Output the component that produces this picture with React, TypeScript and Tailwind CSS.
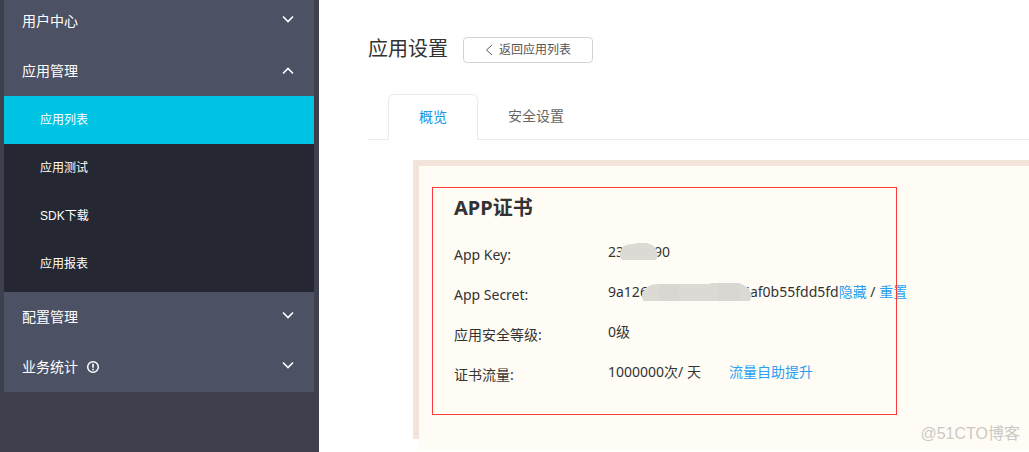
import type { ReactNode } from "react";
import clsx from "clsx";

interface IMenuGroup {
	title: string;
	open?: boolean;
	info?: boolean;
	items?: string[];
}

const menu: IMenuGroup[] = [
	{ title: "用户中心" },
	{
		title: "应用管理",
		open: true,
		items: ["应用列表", "应用测试", "SDK下载", "应用报表"],
	},
	{ title: "配置管理" },
	{ title: "业务统计", info: true },
];

const Chevron = ({ up }: { up?: boolean }) => (
	<svg
		width="12"
		height="8"
		viewBox="0 0 12 8"
		fill="none"
		stroke="currentColor"
		strokeWidth="1.6"
		className={clsx(!up && "mb-1")}
	>
		<path d={up ? "M1 6.5L6 1.5L11 6.5" : "M1 1.5L6 6.5L11 1.5"} />
	</svg>
);

const InfoIcon = () => (
	<svg width="14" height="14" viewBox="0 0 14 14" fill="none" stroke="currentColor">
		<circle cx="7" cy="7" r="5.3" strokeWidth="1.5" />
		<path d="M7 3.8V7.8M7 8.8V10.2" strokeWidth="1.6" />
	</svg>
);

const MenuGroup = ({ title, open, info, items }: IMenuGroup) => (
	<li>
		<button
			aria-expanded={!!open}
			className="flex items-center justify-between w-full h-[50px] pl-[18px] pr-5 text-sm text-white bg-[#4d5164]"
		>
			<span className="flex items-center gap-2">
				{title}
				{info && <InfoIcon />}
			</span>
			<Chevron up={open} />
		</button>

		{open && items && (
			<ul className="pb-1 bg-[#252732]">
				{items.map((item, i) => (
					<li key={item}>
						<a
							href="#"
							className={clsx(
								"flex items-center h-12 pl-9 text-xs text-white",
								i === 0 && "bg-[#00c4e3]"
							)}
						>
							{item}
						</a>
					</li>
				))}
			</ul>
		)}
	</li>
);

const Sidebar = () => (
	<nav className="shrink-0 w-[319px] pl-1 pr-[5px] overflow-hidden bg-[#3e404d] font-['Liberation_Sans','Noto_Sans_CJK_SC',sans-serif]">
		<ul className="-mt-1">
			{menu.map((group) => (
				<MenuGroup key={group.title} {...group} />
			))}
		</ul>
	</nav>
);

const Row = ({ label, children }: { label: string; children: ReactNode }) => (
	<div className="flex items-center h-10">
		<dt className="w-[154px] shrink-0">{label}</dt>
		<dd className="flex items-center pb-1.5 whitespace-pre">{children}</dd>
	</div>
);

const Link = ({ children }: { children: ReactNode }) => (
	<a href="#" className="text-[#2b9ff0]">
		{children}
	</a>
);

const KeyMask = () => (
	<svg width="38" height="18" viewBox="0 0 38 18" className="relative -mx-1">
		<path
			d="M2 17L0 14V10Q1 5 4 3Q7 1 14 1L17 0H26L30 1Q36 4 37 8L38 13L36 17Z"
			fill="#dcdad5"
		/>
	</svg>
);

const SecretMask = () => (
	<svg width="110" height="18" viewBox="0 0 110 18" className="relative -ml-1.5 -mr-2.5">
		<path
			d="M1 18L0 12Q2 6 7 3Q10 1 15 1H66L70 0H96Q104 2 107 6L110 12L108 18Z"
			fill="#dcdad5"
		/>
		<path d="M17 1H37V18H17Z" fill="#d9d7d2" />
		<path d="M76 0H96Q98 0 98 1V18H76Z" fill="#d9d7d2" />
	</svg>
);

const Certificate = () => (
	<section className="relative ml-[45px] mt-5 border-t-6 border-[#f2e4da] flex">
		<div className="w-1.5 mb-[11px] bg-[#f2e4da]" />

		<div className="flex-1 pt-[27px] pb-[55px] pl-[35px] bg-[#fffcf5]">
			<h2 className="mb-3 text-xl leading-[30px] font-bold">APP证书</h2>
			<dl className="text-sm">
				<Row label="App Key:">
					23
					<KeyMask />
					90
				</Row>
				<Row label="App Secret:">
					9a126
					<SecretMask />
					5af0b55fdd5fd
					<Link>隐藏</Link>
					<span>{" / "}</span>
					<Link>重置</Link>
				</Row>
				<Row label="应用安全等级:">0级</Row>
				<Row label="证书流量:">
					<span className="mr-7">1000000次/ 天</span>
					<Link>流量自助提升</Link>
				</Row>
			</dl>
		</div>

		{/* highlight frame over the certificate data */}
		<div className="absolute left-[19px] top-[21px] w-[465px] h-[228px] border border-[#fb3a3a] pointer-events-none" />
	</section>
);

const App = () => (
	<div className="relative flex min-h-screen overflow-hidden bg-white text-[#333] font-['Noto_Sans','Noto_Sans_CJK_SC',sans-serif]">
		<Sidebar />

		<main className="flex-1 min-w-0 pl-[49px] pt-[34px]">
			<header className="flex items-center gap-[15px]">
				<h1 className="text-xl leading-[30px]">应用设置</h1>
				<button className="flex items-center justify-center gap-1.5 w-[130px] h-[26px] mt-0.5 border border-[#d4d4d4] rounded text-xs text-[#555]">
					<svg
						width="8"
						height="12"
						viewBox="0 0 8 12"
						fill="none"
						stroke="currentColor"
						strokeWidth="1"
					>
						<path d="M7 1L1.5 6L7 11" />
					</svg>
					返回应用列表
				</button>
			</header>

			<div role="tablist" className="flex mt-[30px] pl-5 border-b border-[#ebebeb] text-sm">
				<button
					role="tab"
					aria-selected="true"
					className="h-[46px] -mb-px px-[30px] pb-0.5 border border-b-0 border-[#ebebeb] rounded-t-md bg-white text-[#1296e6]"
				>
					概览
				</button>
				<button
					role="tab"
					aria-selected="false"
					className="h-[46px] -mb-px px-[30px] pb-0.5 text-[#666]"
				>
					安全设置
				</button>
			</div>

			<Certificate />
		</main>

		<span className="absolute right-[9px] bottom-1.5 text-base leading-6 text-[#cbc9c4] font-['Liberation_Sans','Noto_Sans_CJK_SC',sans-serif]">
			@51CTO博客
		</span>
	</div>
);

export default App;
